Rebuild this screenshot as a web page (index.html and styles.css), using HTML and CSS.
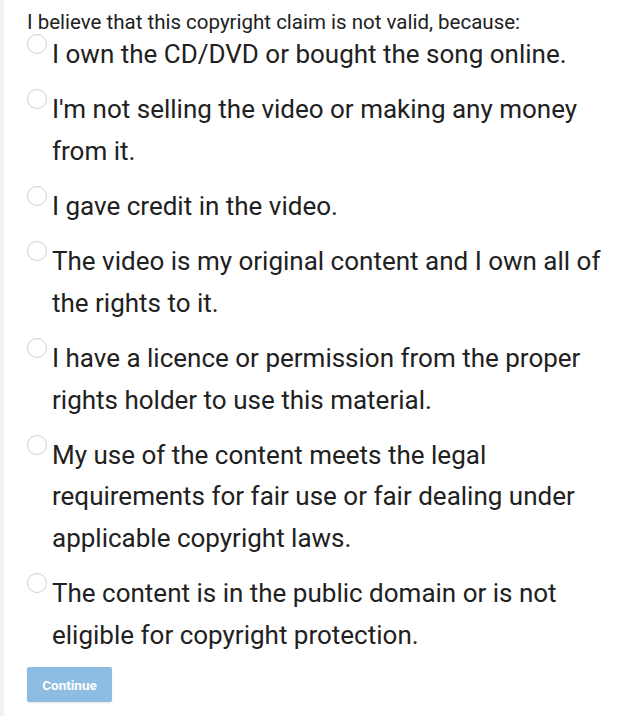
FILE: index.html
```html
<!DOCTYPE html>
<html lang="en">
<head>
    <meta charset="UTF-8">
    <meta name="viewport" content="width=device-width, initial-scale=1.0">
    <title>Dispute copyright claim</title>
    <link rel="stylesheet" href="styles.css">
</head>
<body>

    <div class="page">
        <p class="question">I believe that this copyright claim is not valid, because:</p>

        <label class="option">
            <input type="radio" name="reason">
            <span class="option-text">I own the CD/DVD or bought the song online.</span>
        </label>
        <label class="option">
            <input type="radio" name="reason">
            <span class="option-text">I'm not selling the video or making any money from it.</span>
        </label>
        <label class="option">
            <input type="radio" name="reason">
            <span class="option-text">I gave credit in the video.</span>
        </label>
        <label class="option">
            <input type="radio" name="reason">
            <span class="option-text">The video is my original content and I own all of the rights to it.</span>
        </label>
        <label class="option">
            <input type="radio" name="reason">
            <span class="option-text">I have a licence or permission from the proper rights holder to use this material.</span>
        </label>
        <label class="option">
            <input type="radio" name="reason">
            <span class="option-text">My use of the content meets the legal requirements for fair use or fair dealing under applicable copyright laws.</span>
        </label>
        <label class="option">
            <input type="radio" name="reason">
            <span class="option-text">The content is in the public domain or is not eligible for copyright protection.</span>
        </label>

        <button class="continue" disabled>Continue</button>
    </div>

</body>
</html>
```

FILE: styles.css
```css
* {
    margin: 0;
    padding: 0;
    box-sizing: border-box;
}

body {
    font-family: Roboto, "Noto Sans", Arial, sans-serif;
    background-color: white;
    color: #212121;
}

.page {
    border-left: 4px solid #f2f2f2;
    min-height: 716px;
    padding: 10px 20px 0 23px;
}

.question {
    font-size: 20.5px;
    line-height: 24px;
    color: #222;
}

.option {
    display: flex;
    align-items: flex-start;
    gap: 5px;
    margin-bottom: 13.8px;
    cursor: pointer;
}

.option input {
    appearance: none;
    flex-shrink: 0;
    width: 20px;
    height: 20px;
    margin-top: 0;
    border: 1px solid #cfcfcf;
    border-radius: 50%;
    background-color: white;
}

.option-text {
    font-size: 26px;
    line-height: 41.5px;
}

.continue {
    margin-top: -3px;
    width: 85px;
    height: 35px;
    background-color: #8dbde3;
    color: white;
    border: none;
    border-radius: 2px;
    font-family: Roboto, Arial, sans-serif;
    font-weight: bold;
    font-size: 13.5px;
    box-shadow: 0px 1px 2px rgba(0, 0, 0, 0.1);
}
```
